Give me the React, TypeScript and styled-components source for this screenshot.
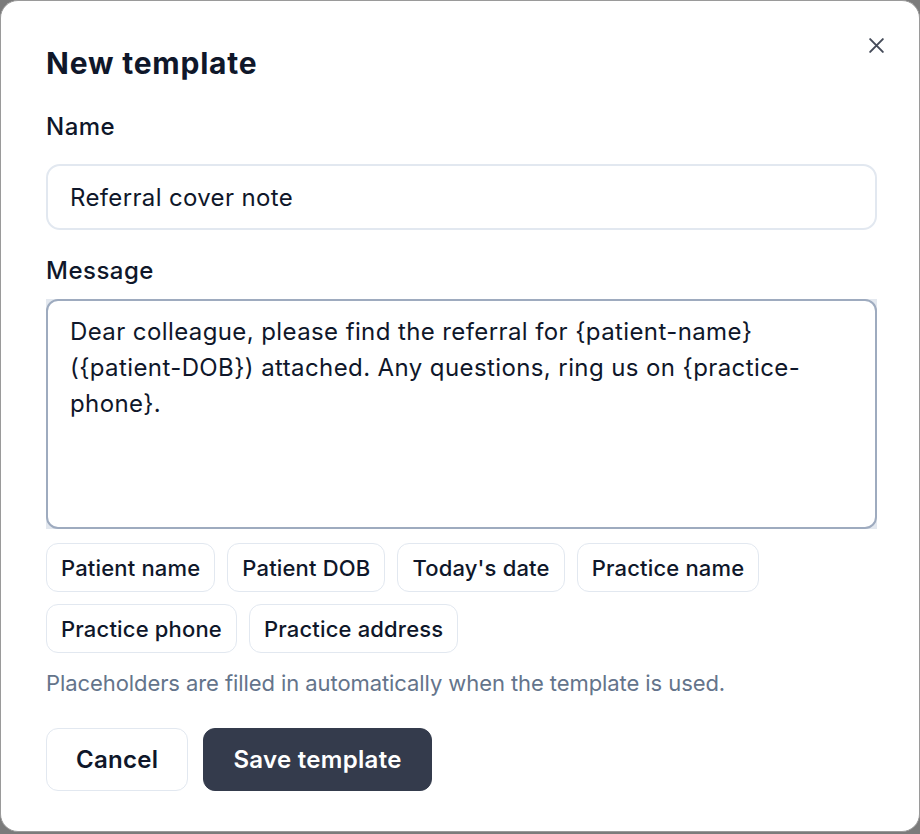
import React from "react"
import styled, { createGlobalStyle } from "styled-components"

const Global = createGlobalStyle`
  html, body {
    margin: 0;
    padding: 0;
    background: #7b7b7b;
    font-family: Inter, "Noto Sans", sans-serif;
    color: #0f172a;
  }
  * { box-sizing: border-box; }
`

const Dialog = styled.div`
  position: relative;
  width: 920px;
  height: 832px;
  background: #fff;
  border: 1px solid #9a9a9a;
  border-radius: 18px;
  padding: 44px 42px 0 45px;
  display: flex;
  flex-direction: column;
`

const Title = styled.h1`
  margin: 0;
  font-size: 30px;
  line-height: 36px;
  font-weight: 700;
  letter-spacing: 0.8px;
`

const Close = styled.button`
  position: absolute;
  top: 34px;
  right: 33px;
  width: 20px;
  height: 20px;
  padding: 0;
  border: none;
  background: none;
  color: #454b59;
  display: flex;
  align-items: center;
  justify-content: center;
`

const Label = styled.label<{ $top: number; $gap: number }>`
  display: block;
  margin-top: ${p => p.$top}px;
  margin-bottom: ${p => p.$gap}px;
  font-size: 24px;
  line-height: 32px;
  font-weight: 500;
  letter-spacing: 0.5px;
`

const Input = styled.input`
  width: 100%;
  height: 66px;
  border: 2px solid #e2e8f0;
  border-radius: 14px;
  padding: 0 22px;
  font-family: inherit;
  font-size: 24px;
  letter-spacing: 0.35px;
  color: #0f172a;
  outline: none;
`

const AreaFrame = styled.div`
  display: flex;
  background: #e3e8ef;
`

const Area = styled.textarea`
  width: 100%;
  height: 230px;
  border: 2px solid #9eabbf;
  border-radius: 12px;
  padding: 13px 22px;
  font-family: inherit;
  font-size: 24px;
  line-height: 36px;
  letter-spacing: 0.4px;
  color: #0f172a;
  resize: none;
  outline: none;
  background: #fff;
`

const Chips = styled.div`
  display: flex;
  flex-wrap: wrap;
  gap: 12px;
  margin-top: 14px;
`

const Chip = styled.button`
  height: 49px;
  padding: 0 14px;
  border: 1.5px solid #e2e8f0;
  border-radius: 12px;
  background: #fff;
  font-family: inherit;
  font-size: 22px;
  font-weight: 500;
  letter-spacing: 0.17px;
  color: #0f172a;
`

const Hint = styled.p`
  margin: 15px 0 0;
  font-size: 22px;
  line-height: 30px;
  letter-spacing: -0.08px;
  color: #64748b;
`

const Actions = styled.div`
  display: flex;
  gap: 15px;
  margin-top: 30px;
`

const Button = styled.button<{ $primary?: boolean }>`
  height: 63px;
  padding: 0 29px;
  border-radius: 12px;
  border: 1.5px solid ${p => (p.$primary ? "#343b4c" : "#e2e8f0")};
  background: ${p => (p.$primary ? "#343b4c" : "#fff")};
  color: ${p => (p.$primary ? "#fff" : "#0f172a")};
  font-family: inherit;
  font-size: 24px;
  font-weight: 600;
  letter-spacing: 0.3px;
`

const placeholders = [
  "Patient name",
  "Patient DOB",
  "Today's date",
  "Practice name",
  "Practice phone",
  "Practice address",
]

const message =
  "Dear colleague, please find the referral for {patient-name} ({patient-DOB}) attached. Any questions, ring us on {practice-phone}."

const App = () => {
  return (
    <>
      <Global />
      <Dialog>
        <Title>New template</Title>
        <Close aria-label="Close">
          <svg width="19" height="19" viewBox="0 0 24 24" fill="none" stroke="currentColor" strokeWidth="2.5" strokeLinecap="round">
            <path d="M4 4l16 16M20 4L4 20" />
          </svg>
        </Close>

        <Label $top={30} $gap={21}>Name</Label>
        <Input defaultValue="Referral cover note" />

        <Label $top={25} $gap={12}>Message</Label>
        <AreaFrame>
          <Area defaultValue={message} />
        </AreaFrame>

        <Chips>
          {placeholders.map(p => (
            <Chip key={p}>{p}</Chip>
          ))}
        </Chips>

        <Hint>Placeholders are filled in automatically when the template is used.</Hint>

        <Actions>
          <Button>Cancel</Button>
          <Button $primary>Save template</Button>
        </Actions>
      </Dialog>
    </>
  )
}

export default App
